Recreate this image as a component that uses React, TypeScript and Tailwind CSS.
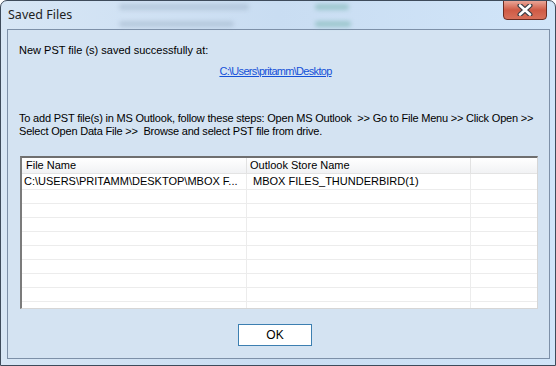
import React from 'react';

const rows = [
  { file: 'C:\\USERS\\PRITAMM\\DESKTOP\\MBOX F...', store: 'MBOX FILES_THUNDERBIRD(1)' },
  ...Array.from({ length: 9 }, () => ({ file: '', store: '' })),
];

function CloseGlyph() {
  return (
    <svg width="16" height="12" viewBox="0 0 16 12">
      <path d="M3 1.5 L13 10.5 M13 1.5 L3 10.5" stroke="#3b3f46" strokeWidth="5" strokeLinecap="round" />
      <path d="M3 1.5 L13 10.5 M13 1.5 L3 10.5" stroke="#ffffff" strokeWidth="2.6" strokeLinecap="round" />
    </svg>
  );
}

export default function App() {
  return (
    <div
      className="w-[556px] h-[366px] flex flex-col border border-[#3e4b5b] rounded-t-[7px] overflow-hidden bg-gradient-to-r from-[#d7e6f5] via-[#c9ddf2] to-[#d1e5f9]"
      style={{ fontFamily: '"Liberation Sans", Arial, sans-serif' }}
    >
      {/* Title bar */}
      <div className="relative h-[28px] flex items-start justify-between shrink-0">
        {/* blurred window behind the glass */}
        <div className="absolute left-[118px] top-[3px] w-[130px] h-[6px] rounded bg-[#9fb3c8] opacity-50 blur-[2px]" />
        <div className="absolute left-[118px] top-[20px] w-[115px] h-[6px] rounded bg-[#9fb3c8] opacity-50 blur-[2px]" />
        <div className="absolute left-[314px] top-[3px] w-[34px] h-[6px] rounded bg-[#7fb8b5] opacity-60 blur-[2px]" />
        <div className="absolute left-[314px] top-[20px] w-[36px] h-[6px] rounded bg-[#7fb8b5] opacity-60 blur-[2px]" />

        <span
          className="relative pl-[7px] pt-[6px] text-[12.5px] leading-[16px] text-[#1e1e1e]"
          style={{ fontFamily: '"Noto Sans", "Open Sans", sans-serif' }}
        >
          Saved Files
        </span>
        <button className="relative mr-[8px] -mt-px w-[44px] h-[20px] flex items-center justify-center rounded-b-[4px] border border-[#6b2c22] bg-gradient-to-b from-[#e9a597] via-[#cf5a45] to-[#d8705a]">
          <CloseGlyph />
        </button>
      </div>

      {/* Client area */}
      <div className="flex-1 ml-[6px] mr-[5px] mb-[6px] border border-[#7d90a8] bg-[#d4e3f2] text-[11px] leading-[13px] text-black">
        <p className="pt-[14px] pl-[11px]">New PST file (s) saved successfully at:</p>
        <p className="mt-[8px] text-center pr-[6px]">
          <a className="text-[#1551d8] underline tracking-[-0.7px]" href="#">
            C:\Users\pritamm\Desktop
          </a>
        </p>
        <div className="mt-[34px] pl-[11px] whitespace-nowrap tracking-[-0.2px]">
          <p>To add PST file(s) in MS Outlook, follow these steps: Open MS Outlook&nbsp; &gt;&gt; Go to File Menu &gt;&gt; Click Open &gt;&gt;</p>
          <p>Select Open Data File &gt;&gt;&nbsp; Browse and select PST file from drive.</p>
        </div>

        {/* List view */}
        <div className="mt-[18px] ml-[12px] w-[518px] h-[153px] overflow-hidden bg-white border-t-2 border-l-2 border-t-[#6f6f6f] border-l-[#7b7b7b] border-r border-b border-r-[#d6d6d6] border-b-[#d6d6d6]">
          <div className="flex h-[16px] border-b border-[#e3e3e3] bg-gradient-to-b from-white to-[#f1f2f4]">
            <div className="w-[225px] pl-[4px] leading-[15px] border-r border-[#e2e2e2]">File Name</div>
            <div className="w-[224px] pl-[3px] leading-[15px] border-r border-[#e2e2e2]">Outlook Store Name</div>
            <div className="flex-1" />
          </div>
          {rows.map((r, i) => (
            <div key={i} className={`flex border-b border-[#ececec] ${i === 0 ? 'h-[16px]' : 'h-[14px]'}`}>
              <div className="w-[225px] pl-[2px] leading-[15px] whitespace-nowrap overflow-hidden border-r border-[#ececec]">
                {r.file}
              </div>
              <div className="w-[224px] pl-[6px] leading-[15px] whitespace-nowrap overflow-hidden border-r border-[#ececec]">
                {r.store}
              </div>
              <div className="flex-1" />
            </div>
          ))}
        </div>

        <button className="mt-[15px] ml-[230px] w-[74px] h-[22px] border border-[#3c7fb1] bg-white text-[12px] leading-[20px]">
          OK
        </button>
      </div>
    </div>
  );
}
